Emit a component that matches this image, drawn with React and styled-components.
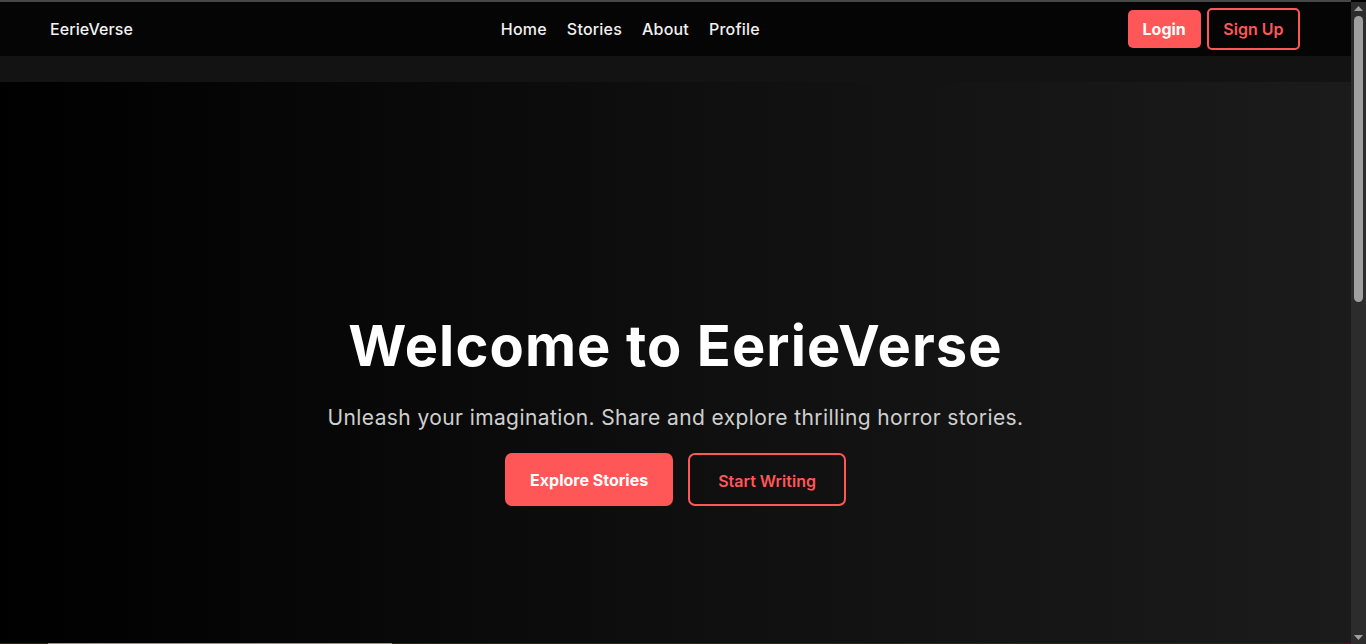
import React from "react";
import styled, { createGlobalStyle } from "styled-components";

const GlobalStyle = createGlobalStyle`
  html { color-scheme: dark; }
  body {
    margin: 0 15px 0 0;
    background: #000;
    font-family: Inter, "Open Sans", sans-serif;
    color: #fff;
  }
  * { box-sizing: border-box; }
  ::-webkit-scrollbar { width: 0; height: 0; }
`;

const ScrollRail = styled.div`
  position: fixed;
  top: 2px;
  right: 0;
  bottom: 0;
  width: 15px;
  background: #2c2c2c;
  display: flex;
  flex-direction: column;
  align-items: center;
  padding: 4px 0;
  gap: 5px;
  z-index: 10;
`;

const Arrow = styled.svg`
  width: 9px;
  height: 5px;
  flex: none;
`;

const Thumb = styled.div`
  width: 9px;
  height: 286px;
  border-radius: 5px;
  background: #9f9f9f;
`;

const RailSpacer = styled.div`
  flex: 1;
`;

const TopEdge = styled.div`
  height: 2px;
  background: #474747;
`;

const Nav = styled.nav`
  height: 54px;
  background: #050505;
  display: flex;
  align-items: center;
  justify-content: space-between;
  padding: 0 51px 0 50px;
`;

const Logo = styled.div`
  font-size: 16px;
  font-weight: 500;
  color: #f2f2f2;
  letter-spacing: 0.1px;
`;

const Links = styled.ul`
  display: flex;
  gap: 20px;
  list-style: none;
  margin: 0;
  padding: 0;
`;

const LinkItem = styled.li`
  font-size: 16px;
  font-weight: 500;
  color: #f0f0f0;
  letter-spacing: 0.2px;
`;

const Actions = styled.div`
  display: flex;
  align-items: center;
  gap: 6px;
`;

const NavButton = styled.button`
  font-family: inherit;
  font-size: 16px;
  line-height: 22px;
  border-radius: 5px;
  cursor: pointer;
  padding: ${(p) => (p.$outline ? "8px 14.5px" : "8px 15px")};
  font-weight: ${(p) => (p.$outline ? 600 : 700)};
  background: ${(p) => (p.$outline ? "transparent" : "#ff5757")};
  color: ${(p) => (p.$outline ? "#ff5757" : "#fff")};
  border: ${(p) => (p.$outline ? "2px solid #ff5757" : "none")};
`;

const Strip = styled.div`
  height: 26px;
  background: #131313;
`;

const Hero = styled.section`
  height: 561px;
  background: linear-gradient(to right, #000 0%, #101010 55%, #1b1b1b 100%);
  display: flex;
  flex-direction: column;
  align-items: center;
  justify-content: center;
  padding-top: 94px;
  text-align: center;
`;

const Title = styled.h1`
  margin: 0;
  font-size: 56px;
  line-height: 1.2;
  font-weight: 700;
  color: #fff;
  letter-spacing: 1.1px;
`;

const Subtitle = styled.p`
  margin: 23px 0 0;
  font-size: 21px;
  line-height: 30px;
  color: #cfcfcf;
  letter-spacing: 0.4px;
`;

const HeroActions = styled.div`
  display: flex;
  gap: 15px;
  margin-top: 20px;
`;

const HeroButton = styled.button`
  font-family: inherit;
  height: 53px;
  border-radius: 7px;
  font-size: 16px;
  font-weight: ${(p) => (p.$outline ? 600 : 700)};
  cursor: pointer;
  padding: ${(p) => (p.$outline ? "2px 28px 0" : "0 25px")};
  background: ${(p) => (p.$outline ? "transparent" : "#ff5757")};
  color: ${(p) => (p.$outline ? "#ff5757" : "#fff")};
  border: ${(p) => (p.$outline ? "2px solid #ff5757" : "none")};
`;

const Divider = styled.div`
  height: 1px;
  background: linear-gradient(
    to right,
    #5a1010 0 48px,
    #b98080 48px 392px,
    #5a1010 392px
  );
`;

const Featured = styled.section`
  background: #0b0b0b;
  padding: 60px 48px;
  min-height: 737px;
`;

const SectionTitle = styled.h2`
  margin: 0 0 32px;
  font-size: 32px;
  font-weight: 700;
  text-align: center;
`;

const Cards = styled.div`
  display: grid;
  grid-template-columns: repeat(3, 1fr);
  gap: 24px;
`;

const Card = styled.article`
  background: #151515;
  border: 1px solid #2a2a2a;
  border-radius: 8px;
  padding: 24px;
  height: 260px;
`;

const CardTitle = styled.h3`
  margin: 0 0 12px;
  font-size: 20px;
  color: #ff5757;
`;

const CardText = styled.p`
  margin: 0;
  color: #bbb;
  font-size: 15px;
  line-height: 1.6;
`;

const stories = [
  { t: "The Whispering Hall", d: "Something stirs behind the walls of the old manor." },
  { t: "Midnight Passenger", d: "The last train never reached its final stop." },
  { t: "Hollow Pines", d: "The forest remembers everyone who enters it." },
];

export default function App() {
  return (
    <>
      <GlobalStyle />
      <ScrollRail aria-hidden="true">
        <Arrow viewBox="0 0 9 5">
          <polygon points="0,5 4.5,0 9,5" fill="#9f9f9f" />
        </Arrow>
        <Thumb />
        <RailSpacer />
        <Arrow viewBox="0 0 9 5">
          <polygon points="0,0 9,0 4.5,5" fill="#9f9f9f" />
        </Arrow>
      </ScrollRail>
      <TopEdge />
      <Nav>
        <Logo>EerieVerse</Logo>
        <Links>
          <LinkItem>Home</LinkItem>
          <LinkItem>Stories</LinkItem>
          <LinkItem>About</LinkItem>
          <LinkItem>Profile</LinkItem>
        </Links>
        <Actions>
          <NavButton>Login</NavButton>
          <NavButton $outline>Sign Up</NavButton>
        </Actions>
      </Nav>
      <Strip />
      <Hero>
        <Title>Welcome to EerieVerse</Title>
        <Subtitle>
          Unleash your imagination. Share and explore thrilling horror stories.
        </Subtitle>
        <HeroActions>
          <HeroButton>Explore Stories</HeroButton>
          <HeroButton $outline>Start Writing</HeroButton>
        </HeroActions>
      </Hero>
      <Divider />
      <Featured>
        <SectionTitle>Featured Stories</SectionTitle>
        <Cards>
          {stories.map((s) => (
            <Card key={s.t}>
              <CardTitle>{s.t}</CardTitle>
              <CardText>{s.d}</CardText>
            </Card>
          ))}
        </Cards>
      </Featured>
    </>
  );
}
